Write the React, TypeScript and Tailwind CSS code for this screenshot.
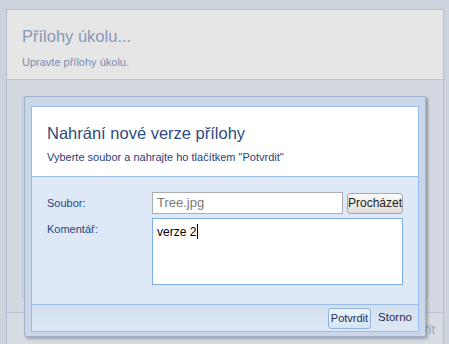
import { FC } from "react";

const font = { fontFamily: '"Liberation Sans", "DejaVu Sans", sans-serif' };

const App: FC = () => {
  return (
    <div
      className="relative w-[449px] h-[344px] overflow-hidden bg-[#ccd3dd] pl-[6px] pr-[5px] pt-[9px]"
      style={font}
    >
      {/* stránka za dialogem */}
      <div className="flex h-[340px] flex-col border border-[#b3c0d2] bg-[#d4d9e1]">
        <div className="h-[70px] border-b border-[#b7c4d6] bg-[#e6e6e6] px-[15px] pt-[15px]">
          <h1 className="text-[16.5px] leading-[22px] text-[#8797b8]">Přílohy úkolu...</h1>
          <p className="mt-[8px] text-[11px] leading-[14px] text-[#7b8db3]">Upravte přílohy úkolu.</p>
        </div>
        <div className="h-[232px] px-[15px] pt-[17px]">
          <div className="h-[200px] border border-[#bac6d6]" />
        </div>
        <div className="flex flex-1 justify-end border-t border-[#bac6d6] bg-[#d7dce3] pr-[8px] pt-[8px]">
          <span className="text-[12px] text-[#98a3b3]">Zavřít</span>
        </div>
      </div>

      {/* dialog */}
      <div className="absolute left-[24px] top-[96px] w-[402px] rounded-[2px] border border-[#9fb0c8] bg-[#cad7ea] px-[6px] pb-[4px] pt-[9px] shadow-[2px_2px_3px_rgba(0,0,0,0.25)]">
        <div className="border border-[#99bce8]">
          <div className="h-[70px] border-b border-[#99bce8] bg-white px-[15px] pt-[14px]">
            <h2 className="text-[16.5px] leading-[24px] text-[#2e4b7d]">Nahrání nové verze přílohy</h2>
            <p className="mt-[5px] text-[11px] leading-[14px] text-[#2b417a]">
              Vyberte soubor a nahrajte ho tlačítkem "Potvrdit"
            </p>
          </div>
          <div className="h-[128px] border-b border-[#99bce8] bg-[#dfe8f6] pl-[15px] pr-[15px] pt-[15px]">
            <div className="flex items-center">
              <span className="w-[105px] text-[11px] text-[#284680]">Soubor:</span>
              <div className="flex h-[22px] w-[191px] items-center border border-[#abadb3] bg-white px-[4px] text-[13px] text-[#7a7a7a]">
                Tree.jpg
              </div>
              <button className="ml-[4px] h-[21px] w-[56px] rounded-[3px] border border-[#a7a7a7] bg-gradient-to-b from-[#fbfbfb] to-[#dedede] text-[12px] text-[#222]">
                Procházet
              </button>
            </div>
            <div className="mt-[4px] flex">
              <span className="w-[105px] pt-[3px] text-[11px] text-[#284680]">Komentář:</span>
              <div className="h-[67px] w-[251px] border border-[#7eaee3] bg-white px-[4px] pt-[2px] text-[12px] text-black">
                verze 2<span className="ml-[1px] inline-block h-[15px] w-px translate-y-[3px] bg-black" />
              </div>
            </div>
          </div>
          <div className="flex h-[26px] items-center justify-end gap-[7px] bg-gradient-to-b from-[#d5e0ef] to-[#dde7f5] pr-[6px]">
            <button className="h-[21px] rounded-[3px] border border-[#8fb2de] bg-gradient-to-b from-[#eef4fc] to-[#d6e4f6] px-[2px] text-[11px] text-[#1f2f4f]">
              Potvrdit
            </button>
            <span className="text-[11.5px] text-[#1f2f4f]">Storno</span>
          </div>
        </div>
      </div>
    </div>
  );
};

export default App;
